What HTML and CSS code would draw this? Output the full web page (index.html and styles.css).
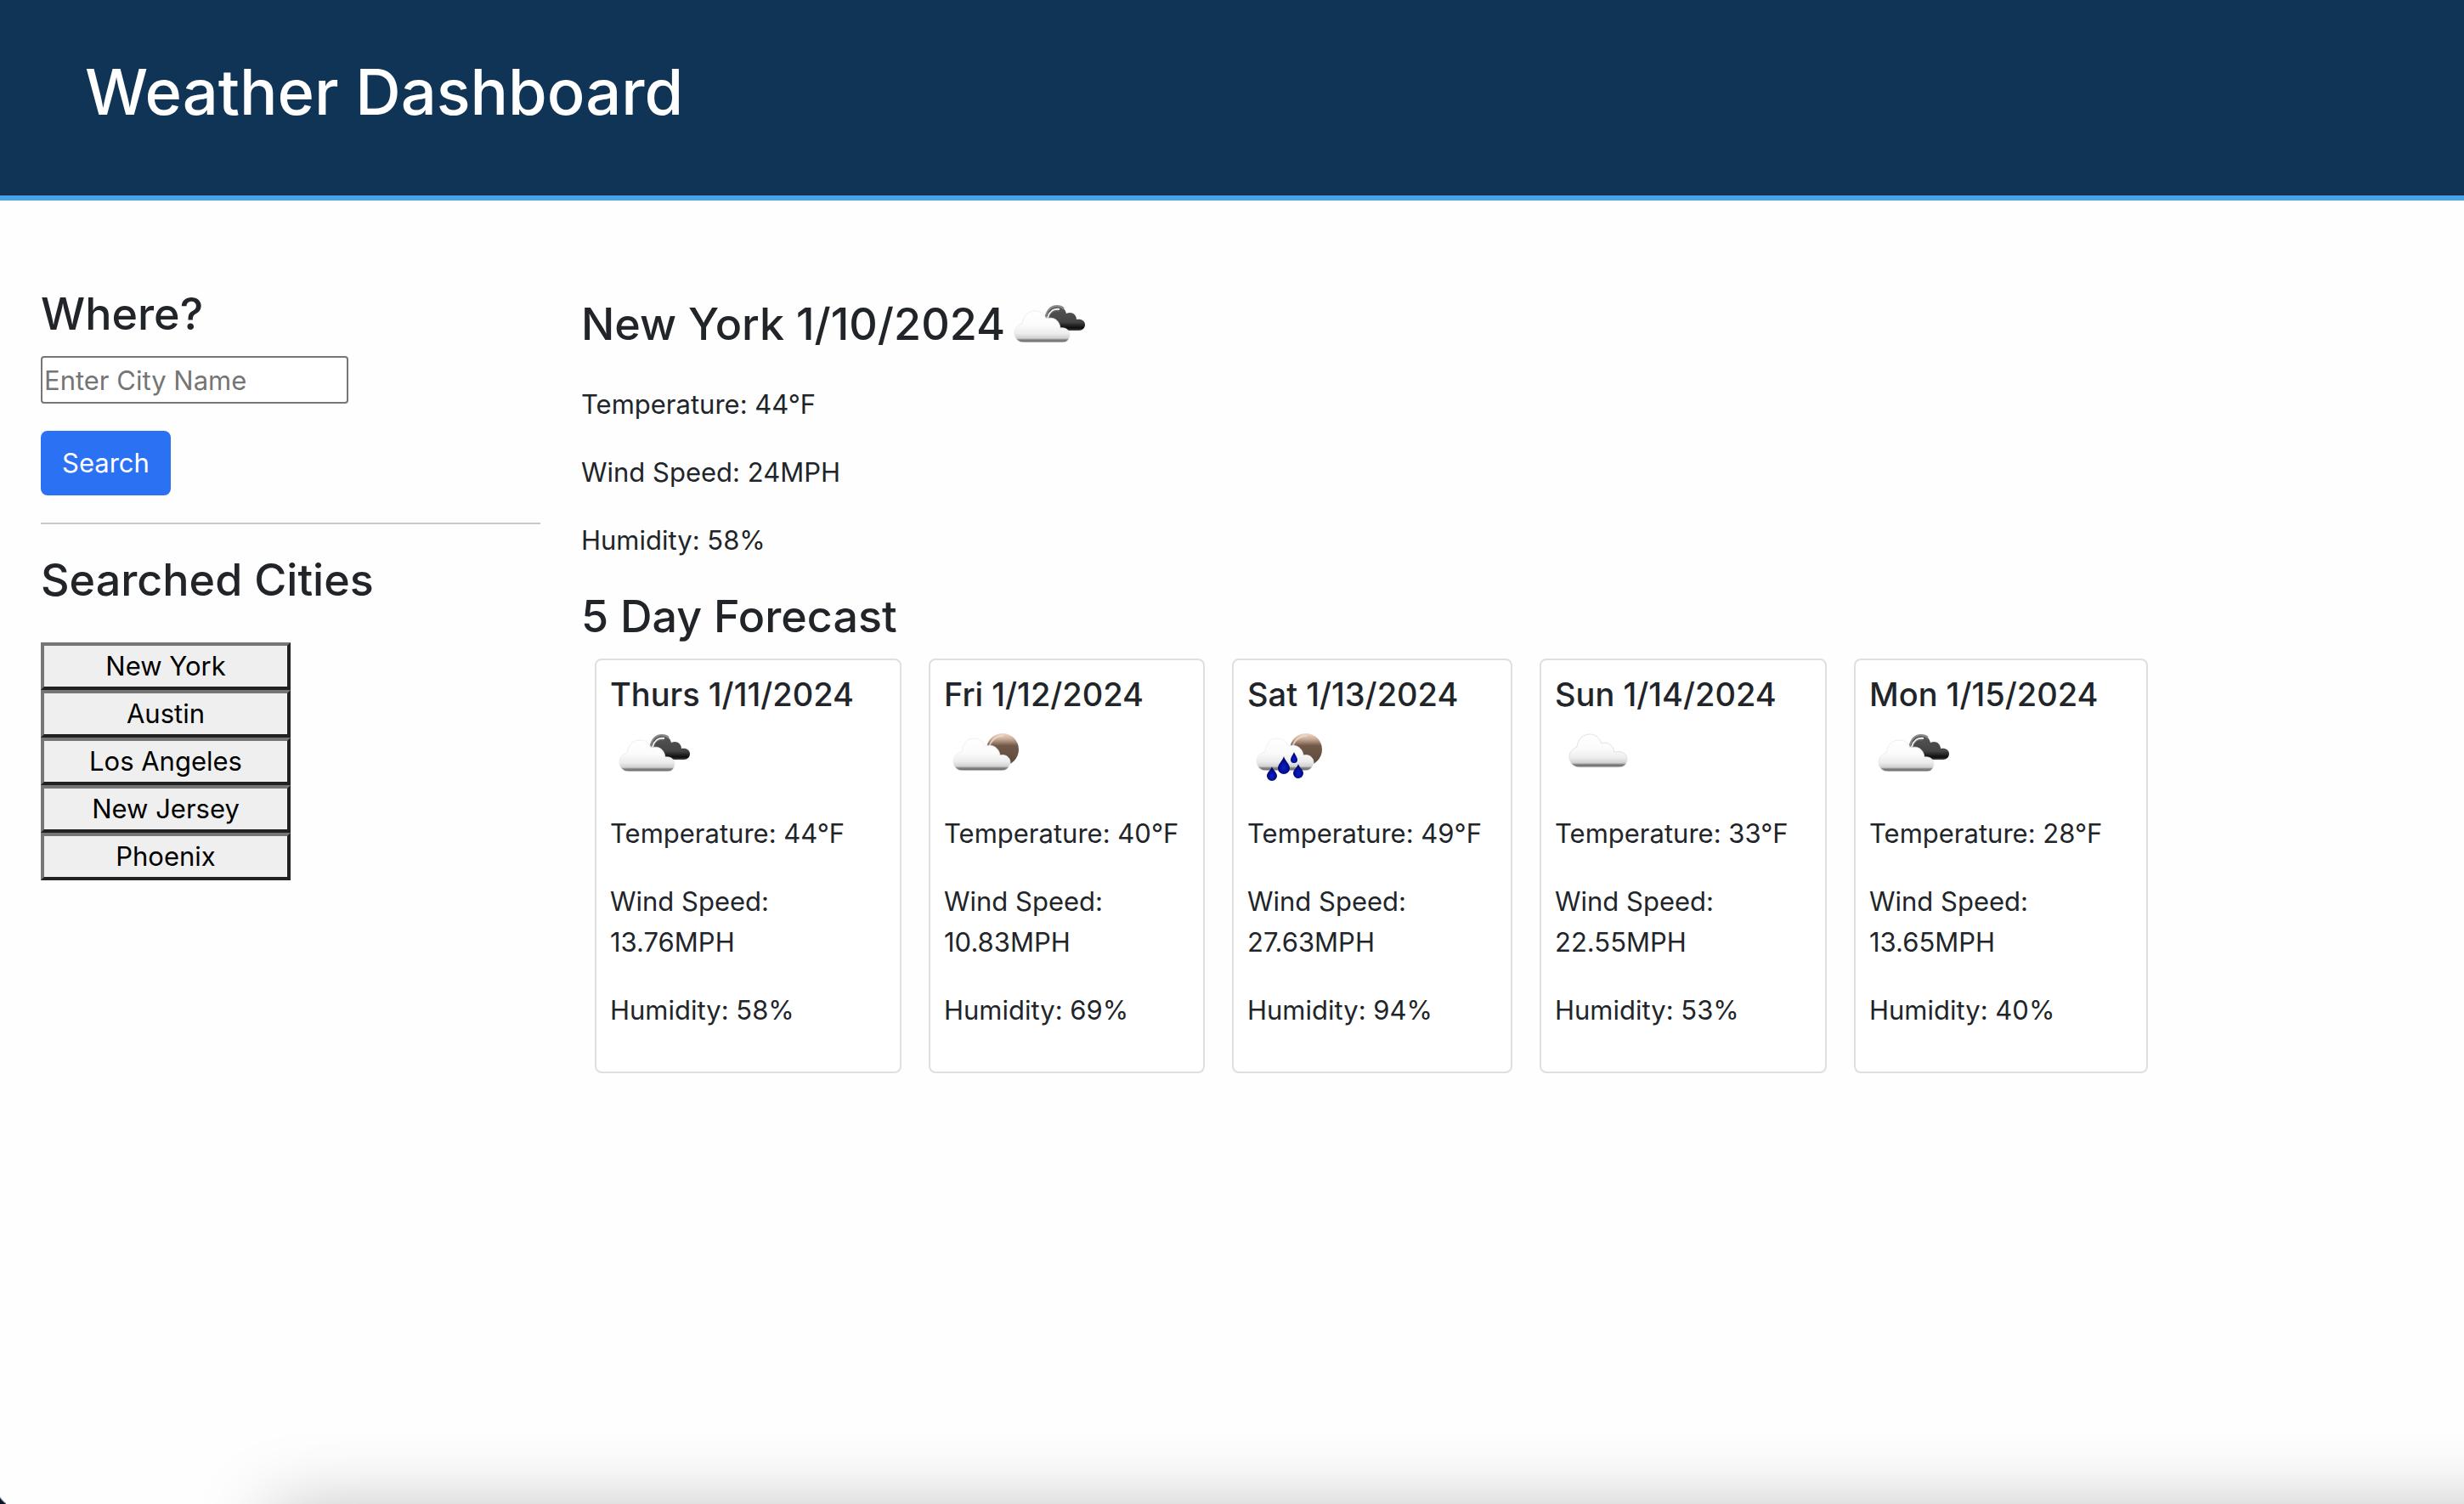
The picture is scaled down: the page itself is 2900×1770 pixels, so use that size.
FILE: index.html
```html
<!DOCTYPE html>
<html lang="en">
<head>
  <meta charset="utf-8">
  <meta name="viewport" content="width=device-width, initial-scale=1">
  <title>Weather Dashboard</title>
  <link rel="stylesheet" href="styles.css">
</head>
<body>
  <svg class="sprite" aria-hidden="true">
    <defs>
      <linearGradient id="cloud-fill" x1="0" y1="0" x2="0" y2="1">
        <stop offset="0" stop-color="#ffffff"/>
        <stop offset="0.45" stop-color="#fbfbfb"/>
        <stop offset="0.72" stop-color="#ececec"/>
        <stop offset="0.87" stop-color="#cfcfcf"/>
        <stop offset="0.91" stop-color="#8a8a8a"/>
        <stop offset="0.97" stop-color="#6c6c6c"/>
        <stop offset="1" stop-color="#b5b5b5"/>
      </linearGradient>
      <linearGradient id="dark-fill" x1="0" y1="0" x2="0" y2="1">
        <stop offset="0" stop-color="#6a6a6a"/>
        <stop offset="0.2" stop-color="#505050"/>
        <stop offset="0.65" stop-color="#444444"/>
        <stop offset="0.9" stop-color="#0c0c0c"/>
        <stop offset="1" stop-color="#4a4a4a"/>
      </linearGradient>
      <linearGradient id="moon-fill" x1="0" y1="0" x2="0" y2="1">
        <stop offset="0" stop-color="#f3dac8"/>
        <stop offset="0.18" stop-color="#c9ab95"/>
        <stop offset="0.38" stop-color="#72594a"/>
        <stop offset="1" stop-color="#5a4838"/>
      </linearGradient>
      <radialGradient id="drop-fill" cx="0.5" cy="0.65" r="0.5">
        <stop offset="0" stop-color="#0a1fd0"/>
        <stop offset="1" stop-color="#03056e"/>
      </radialGradient>
      <path id="cloud" d="M22 67C15 67 11 62 11 56C11 50 15 46 20 45C21 36 27 30 35 30C42 30 46 33 48 39C57 36 64 41 65 50C72 49 76 53 76 58C76 63 73 67 68 67Z"/>
      <g id="moon-cloud">
        <circle cx="69" cy="41" r="19" fill="url(#moon-fill)"/>
        <path d="M53 40C54 31 61 25 70 25" fill="none" stroke="#efe0d6" stroke-width="2" opacity="0.75"/>
        <path d="M22 66C15 66 11 61 11 55C11 49 15 45 21 44C22 34 27 28 35 28C42 28 46 31 48 37C57 34 65 39 66 48C73 46 78 51 78 56C78 61 74 66 68 66Z" fill="url(#cloud-fill)" stroke="#ececec" stroke-width="0.8"/>
      </g>
      <symbol id="icon-broken" viewBox="0 0 100 100">
        <path d="M48 37C50 29 55 24 61 24C67 24 71 28 72 33C78 30 84 34 84 40C90 39 94 42 94 46C94 50 91 53 87 53H66C60 50 55 42 48 37Z" fill="url(#dark-fill)"/>
        <path d="M47 39C49 29 54 24 61 24C64 24 67 25 69 27" fill="none" stroke="#8b8b8b" stroke-width="2"/>
        <path d="M50 38C52 31 57 27 64 28" fill="none" stroke="#f1f1f1" stroke-width="2"/>
        <path d="M52 36C54 31 58 29 63 30" fill="none" stroke="#777777" stroke-width="1"/>
        <use href="#cloud" fill="url(#cloud-fill)" stroke="#e9e9e9" stroke-width="0.8"/>
      </symbol>
      <symbol id="icon-few" viewBox="0 0 100 100"><use href="#moon-cloud"/></symbol>
      <symbol id="icon-rain" viewBox="0 0 100 100">
        <use href="#moon-cloud"/>
        <g fill="url(#drop-fill)">
          <path d="M43 49C44 54 50 58 50 63A7 7 0 0 1 36 63C36 58 42 54 43 49Z"/>
          <path d="M55 44C56 47 59 50 59 53A4 4 0 0 1 51 53C51 50 54 47 55 44Z"/>
          <path d="M60 58C61 62 66 65 66 69A6 6 0 0 1 54 69C54 65 59 62 60 58Z"/>
          <path d="M29 61C30 65 35 68 35 72A6 6 0 0 1 23 72C23 68 28 65 29 61Z"/>
        </g>
      </symbol>
      <symbol id="icon-scattered" viewBox="0 0 100 100">
        <path d="M29 62C22 62 17 57 17 50C17 44 21 40 26 38C27 29 33 23 41 23C48 23 53 28 55 34C62 31 69 36 70 44C79 42 85 46 85 52C85 58 82 62 75 62Z" fill="url(#cloud-fill)" stroke="#e2e2e2" stroke-width="1"/>
      </symbol>
    </defs>
  </svg>

  <header class="page-header">
    <h1 class="page-title">Weather Dashboard</h1>
  </header>

  <div class="layout">
    <aside class="sidebar">
      <form class="search">
        <h2 class="section-title"><label for="city">Where?</label></h2>
        <input class="search-input" id="city" type="text" placeholder="Enter City Name">
        <button class="search-button" type="button">Search</button>
      </form>
      <hr class="divider">
      <h2 class="section-title">Searched Cities</h2>
      <div class="city-list">
        <button class="city" type="button">New York</button>
        <button class="city" type="button">Austin</button>
        <button class="city" type="button">Los Angeles</button>
        <button class="city" type="button">New Jersey</button>
        <button class="city" type="button">Phoenix</button>
      </div>
    </aside>

    <main class="main">
      <section class="current">
        <h2 class="section-title">New York 1/10/2024<svg class="icon icon-inline" aria-hidden="true"><use href="#icon-broken"/></svg></h2>
        <p class="reading">Temperature: 44°F</p>
        <p class="reading">Wind Speed: 24MPH</p>
        <p class="reading">Humidity: 58%</p>
      </section>
      <h2 class="section-title">5 Day Forecast</h2>
      <section class="forecast">
        <article class="card">
          <h3 class="card-title">Thurs 1/11/2024</h3>
          <svg class="icon" aria-hidden="true"><use href="#icon-broken"/></svg>
          <p class="reading">Temperature: 44°F</p>
          <p class="reading">Wind Speed:<br>13.76MPH</p>
          <p class="reading">Humidity: 58%</p>
        </article>
        <article class="card">
          <h3 class="card-title">Fri 1/12/2024</h3>
          <svg class="icon" aria-hidden="true"><use href="#icon-few"/></svg>
          <p class="reading">Temperature: 40°F</p>
          <p class="reading">Wind Speed:<br>10.83MPH</p>
          <p class="reading">Humidity: 69%</p>
        </article>
        <article class="card">
          <h3 class="card-title">Sat 1/13/2024</h3>
          <svg class="icon" aria-hidden="true"><use href="#icon-rain"/></svg>
          <p class="reading">Temperature: 49°F</p>
          <p class="reading">Wind Speed:<br>27.63MPH</p>
          <p class="reading">Humidity: 94%</p>
        </article>
        <article class="card">
          <h3 class="card-title">Sun 1/14/2024</h3>
          <svg class="icon" aria-hidden="true"><use href="#icon-scattered"/></svg>
          <p class="reading">Temperature: 33°F</p>
          <p class="reading">Wind Speed:<br>22.55MPH</p>
          <p class="reading">Humidity: 53%</p>
        </article>
        <article class="card">
          <h3 class="card-title">Mon 1/15/2024</h3>
          <svg class="icon" aria-hidden="true"><use href="#icon-broken"/></svg>
          <p class="reading">Temperature: 28°F</p>
          <p class="reading">Wind Speed:<br>13.65MPH</p>
          <p class="reading">Humidity: 40%</p>
        </article>
      </section>
    </main>
  </div>
  <div class="window-edge" aria-hidden="true"></div>
</body>
</html>
```
FILE: styles.css
```css
* {
  box-sizing: border-box;
}

body {
  margin: 0;
  min-height: 100vh;
  background: #fefefe;
  color: #212529;
  font-family: Inter, "Liberation Sans", sans-serif;
  font-size: 31px;
  line-height: 48px;
}

h1, h2, h3, p {
  margin: 0;
}

.sprite {
  position: absolute;
  width: 0;
  height: 0;
}

.page-header {
  padding: 60px 100px 74px;
  background: #103456;
  border-bottom: 6px solid #47a3e3;
}

.page-title {
  color: #ffffff;
  font-size: 74px;
  font-weight: 500;
  line-height: 96px;
}

.layout {
  display: grid;
  grid-template-columns: minmax(0, 588fr) minmax(0, 2168fr);
  gap: 48px;
  padding: 100px 48px;
}

.section-title {
  margin-bottom: 16px;
  font-size: 52px;
  font-weight: 500;
  line-height: 67px;
}

.search {
  display: flex;
  flex-direction: column;
  align-items: flex-start;
}

.search-input {
  width: 362px;
  height: 56px;
  padding: 2px;
  border: 2px solid #767676;
  border-radius: 4px;
  background: #ffffff;
  color: inherit;
  font: inherit;
}

.search-input::placeholder {
  color: #757575;
}

.search-button {
  margin-top: 32px;
  padding: 14px 25px;
  border: 0;
  border-radius: 8px;
  background: #2b71f3;
  color: #ffffff;
  font: inherit;
}

.divider {
  height: 2px;
  margin: 32px 0;
  border: 0;
  background: #c7c8c9;
}

.city-list {
  display: flex;
  flex-direction: column;
  width: 50%;
  padding-top: 24px;
}

.city {
  height: 56px;
  padding: 0;
  border: 4px solid;
  border-color: #767676 #212121 #212121 #767676;
  background: #efefef;
  color: #000000;
  font: inherit;
}

.icon {
  display: block;
  width: 100px;
  height: 100px;
}

.icon-inline {
  display: inline-block;
  vertical-align: middle;
}

.reading {
  margin-bottom: 32px;
}

.forecast {
  display: grid;
  grid-template-columns: 361fr 325fr 330fr 338fr 346fr;
  gap: 32px;
  max-width: 1844px;
  padding-left: 16px;
}

.card {
  padding: 16px;
  border: 2px solid #dedfdf;
  border-radius: 8px;
  background: #ffffff;
}

.card .icon {
  margin-bottom: 16px;
}

.card-title {
  font-size: 38px;
  font-weight: 500;
  line-height: 48px;
  white-space: nowrap;
}

/* Shade cast along the bottom edge, and the rounded window corner */
.window-edge {
  position: fixed;
  inset: auto 0 0 0;
  height: 120px;
  overflow: hidden;
  pointer-events: none;
}

.window-edge::before {
  content: "";
  position: absolute;
  top: 130px;
  left: 320px;
  right: -200px;
  height: 200px;
  box-shadow: 0 0 90px rgba(0, 0, 0, 0.28);
}

.window-edge::after {
  content: "";
  position: absolute;
  left: 0;
  bottom: 0;
  width: 7px;
  height: 18px;
  background: radial-gradient(circle at 24px -6px, transparent 28px, #06142a 30px);
}
```
